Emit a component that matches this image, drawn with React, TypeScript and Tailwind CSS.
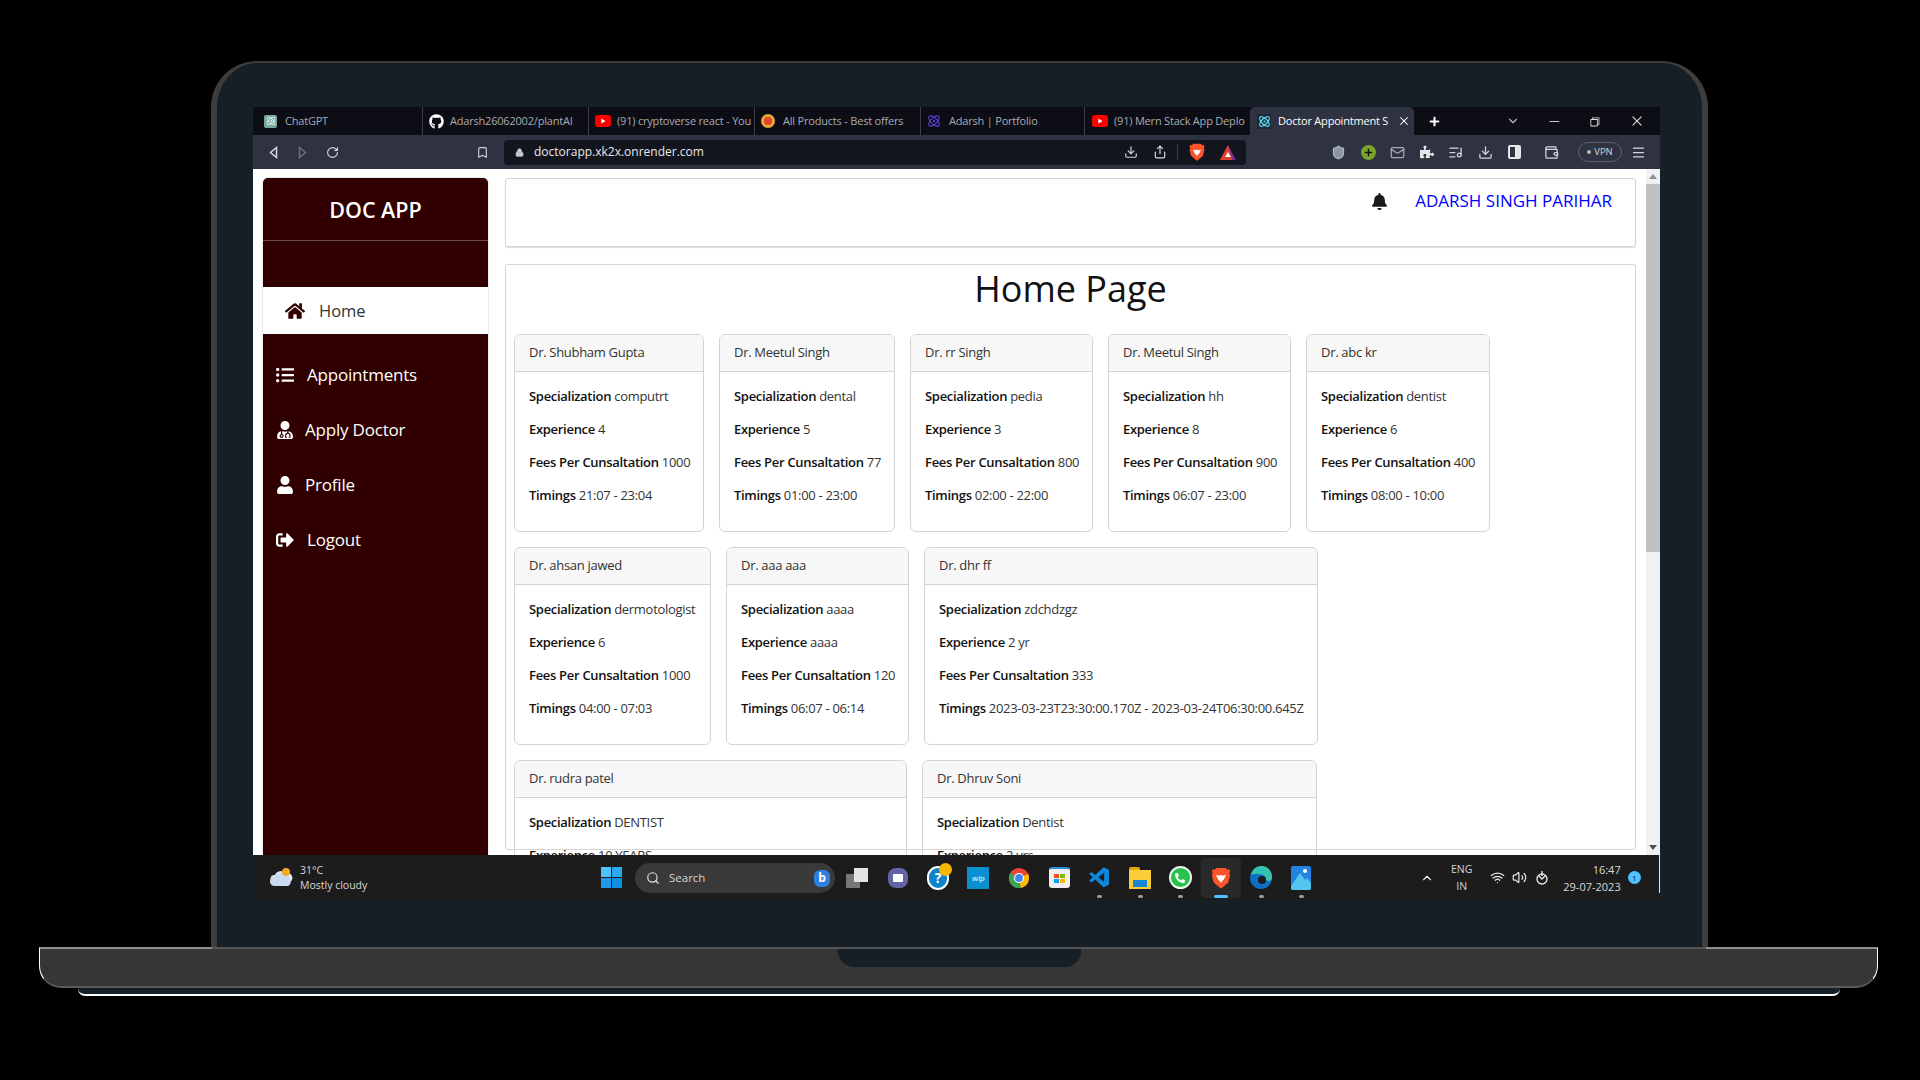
import React from "react";
import { FaHome, FaListUl, FaUserMd, FaUser, FaSignOutAlt, FaBell, FaGithub, FaPuzzlePiece, FaPhoneAlt, FaPlus } from "react-icons/fa";
import { VscChromeMinimize, VscChromeRestore, VscChromeClose, VscVscode } from "react-icons/vsc";
import { Search, ChevronDown, ChevronUp, RotateCw, Lock, Bookmark, Download, Share, Mail, ListMusic, Wifi, Volume2, Wallet, Menu, Shield, Plus, Atom } from "lucide-react";

const doctors = [
  { name: "Dr. Shubham Gupta", spec: "computrt", exp: "4", fee: "1000", time: "21:07 - 23:04", w: "w-[190px]" },
  { name: "Dr. Meetul Singh", spec: "dental", exp: "5", fee: "77", time: "01:00 - 23:00", w: "w-[176px]" },
  { name: "Dr. rr Singh", spec: "pedia", exp: "3", fee: "800", time: "02:00 - 22:00", w: "w-[183px]" },
  { name: "Dr. Meetul Singh", spec: "hh", exp: "8", fee: "900", time: "06:07 - 23:00", w: "w-[183px]" },
  { name: "Dr. abc kr", spec: "dentist", exp: "6", fee: "400", time: "08:00 - 10:00", w: "w-[184px]" },
  { name: "Dr. ahsan jawed", spec: "dermotologist", exp: "6", fee: "1000", time: "04:00 - 07:03", w: "w-[197px]" },
  { name: "Dr. aaa aaa", spec: "aaaa", exp: "aaaa", fee: "120", time: "06:07 - 06:14", w: "w-[183px]" },
  { name: "Dr. dhr ff", spec: "zdchdzgz", exp: "2 yr", fee: "333", time: "2023-03-23T23:30:00.170Z - 2023-03-24T06:30:00.645Z", w: "w-[394px]" },
  { name: "Dr. rudra patel", spec: "DENTIST", exp: "10 YEARS", fee: "500", time: "09:00 - 17:00", w: "w-[393px]" },
  { name: "Dr. Dhruv Soni", spec: "Dentist", exp: "2 yrs", fee: "300", time: "10:00 - 18:00", w: "w-[395px]" },
];

function Yt() {
  return (
    <svg width="16" height="12" viewBox="0 0 16 12">
      <rect width="16" height="12" rx="3" fill="#f00" />
      <path d="M6.3 3.4 10.6 6l-4.3 2.6Z" fill="#fff" />
    </svg>
  );
}

function BraveLogo({ size, className }: { size: number; className?: string }) {
  return (
    <svg width={size} height={size} viewBox="0 0 24 24" className={className}>
      <path d="M7 1h10l2 2 2-.5 1 2-1 2.500 1 2-2 8-7 6-1 .5-1-.5-7-6-2-8 1-2-1-2.500 1-2 2 .5Z" fill="#fb542b" />
      <path d="M6.500 8.500 10 9.500l2-1 2 1 3.500-1L15 14l-2 1.500-1 2-1-2L9 14Z" fill="#fff" />
    </svg>
  );
}

const tabs = [
  { t: "ChatGPT", w: "w-[169px] pl-[11px] gap-[8px]", i: <span className="w-[13px] h-[13px] rounded-[2px] bg-[#74aa9c] flex items-center justify-center"><Atom size={10} color="#fff" /></span> },
  { t: "Adarsh26062002/plantAI", w: "w-[166px] pl-[6px] gap-[6px] border-l border-[#3b3e4a]", i: <FaGithub size={15} color="#fff" /> },
  { t: "(91) cryptoverse react - You", w: "w-[166px] pl-[6px] gap-[6px] border-l border-[#3b3e4a]", i: <Yt /> },
  { t: "All Products - Best offers", w: "w-[166px] pl-[6px] gap-[8px] border-l border-[#3b3e4a]", i: <span className="w-[14px] h-[14px] rounded-full bg-[#e2452c] border-[3px] border-[#e8a33a]" /> },
  { t: "Adarsh | Portfolio", w: "w-[164px] pl-[6px] gap-[8px] border-l border-[#3b3e4a]", i: <Atom size={14} color="#5a3fd6" /> },
  { t: "(91) Mern Stack App Deplo", w: "w-[166px] pl-[7px] gap-[6px] border-l border-[#3b3e4a]", i: <Yt /> },
];

function Tab({ t, i, w }: { t: string; i: React.ReactNode; w: string }) {
  return (
    <div className={`h-[28px] flex items-center shrink-0 overflow-hidden whitespace-nowrap ${w}`}>
      {i}
      <span className="text-[11px] tracking-[-0.2px] text-[#a9abb2]">{t}</span>
    </div>
  );
}

function Card({ d }: { d: (typeof doctors)[number] }) {
  return (
    <div className={`${d.w} h-[198px] shrink-0 border border-[#d4d4d4] rounded-[6px] overflow-hidden whitespace-nowrap`}>
      <div className="h-[37px] bg-[#f7f7f7] border-b border-[#d4d4d4] pl-[14px] flex items-center text-[13px] tracking-[-0.3px] text-[#333]">{d.name}</div>
      <div className="pl-[14px] pt-[16px] text-[13px] tracking-[-0.3px] leading-[17px] text-[#333]">
        <p className="mb-[16px]"><b className="font-semibold text-[#111]">Specialization</b> {d.spec}</p>
        <p className="mb-[16px]"><b className="font-semibold text-[#111]">Experience</b> {d.exp}</p>
        <p className="mb-[16px]"><b className="font-semibold text-[#111]">Fees Per Cunsaltation</b> {d.fee}</p>
        <p><b className="font-semibold text-[#111]">Timings</b> {d.time}</p>
      </div>
    </div>
  );
}

function NavItem({ icon, label, gap, h }: { icon: React.ReactNode; label: string; gap: string; h: string }) {
  return (
    <div className={`flex items-center pl-[13px] text-white text-[17px] tracking-[-0.2px] ${gap} ${h}`}>
      {icon}
      <span>{label}</span>
    </div>
  );
}

function TbIcon({ children, dot, active }: { children: React.ReactNode; dot?: boolean; active?: boolean }) {
  return (
    <div className={`relative w-[40.4px] h-[40px] flex items-center justify-center rounded-[4px] ${active ? "bg-[#292929]" : ""}`}>
      {children}
      {dot && <span className="absolute bottom-0 left-[18px] w-[5px] h-[3px] rounded-full bg-[#9a9a9a]" />}
      {active && <span className="absolute bottom-0 left-[13px] w-[14px] h-[3px] rounded-full bg-[#4cc2ff]" />}
    </div>
  );
}

function ChromeLogo() {
  return (
    <svg width="22" height="22" viewBox="0 0 24 24">
      <circle cx="12" cy="12" r="11" fill="#ea4335" />
      <path d="M12 12 L2.5 17.5 A11 11 0 0 1 2.5 6.5 Z" fill="#34a853" />
      <path d="M12 12 L2.5 17.5 A11 11 0 0 0 14 22.8 Z" fill="#34a853" />
      <path d="M12 12 L22 7.5 A11 11 0 0 1 14 22.8 Z" fill="#fbbc05" />
      <circle cx="12" cy="12" r="5.5" fill="#fff" />
      <circle cx="12" cy="12" r="4.3" fill="#4285f4" />
    </svg>
  );
}

function Taskbar() {
  return (
    <div className="h-[45px] bg-[#1c1c1c] flex items-center relative text-white shrink-0">
      <div className="w-[17px]" />
      <svg width="24" height="22" viewBox="0 0 24 22">
        <path d="M4 16a4 4 0 0 1 1-8 6 6 0 0 1 10-2 5 5 0 0 1 4 10Z" fill="#dbe7f5" />
        <circle cx="16" cy="5" r="4" fill="#f5a623" />
        <path d="M5 10a5 5 0 0 1 9-1 5 5 0 0 1 6 4 4 4 0 0 1-2 6H4a4 4 0 0 1 1-9Z" fill="#c9daf0" />
      </svg>
      <div className="ml-[6px] w-[100px] text-[10.5px] leading-[15px] text-[#d8d8d8]">
        <div>31°C</div>
        <div>Mostly cloudy</div>
      </div>
      <div className="ml-[201px] w-[21px] h-[21px] grid grid-cols-2 gap-[1px]">
        <span className="bg-[#4fc3f7]" /><span className="bg-[#29a9f0]" /><span className="bg-[#1e9aea]" /><span className="bg-[#1090e0]" />
      </div>
      <div className="ml-[13px] w-[200px] h-[30px] rounded-full bg-[#3a3a3a] flex items-center pl-[11px] text-[11.5px] text-[#d4d4d4] gap-[9px] relative">
        <Search size={14} color="#e5e5e5" />
        <span>Search</span>
        <span className="absolute right-[5px] top-[7px] w-[16px] h-[17px] rounded-[6px] bg-[#2f7fe0] text-[12px] font-bold leading-[16px] text-center text-white">b</span>
      </div>
      <div className="ml-[2px] flex items-center">
        <TbIcon>
          <span className="relative w-[22px] h-[20px] block">
            <span className="absolute left-0 bottom-0 w-[14px] h-[14px] bg-[#777]" />
            <span className="absolute right-0 top-0 w-[14px] h-[14px] bg-[#e4e4e4]" />
          </span>
        </TbIcon>
        <TbIcon>
          <span className="w-[20px] h-[20px] rounded-[8px] bg-[#6264a7] flex items-center justify-center">
            <span className="w-[10px] h-[8px] bg-white rounded-[1px]" />
          </span>
        </TbIcon>
        <TbIcon>
          <span className="relative w-[22px] h-[24px] rounded-full bg-[#0d84c7] border-2 border-white text-white text-[14px] font-bold leading-[20px] text-center">?
            <span className="absolute -right-[5px] -top-[5px] w-[13px] h-[13px] rounded-full bg-[#f9b800]" />
          </span>
        </TbIcon>
        <TbIcon>
          <span className="w-[22px] h-[22px] bg-[#0a8fd1] text-white text-[8px] italic flex items-center justify-center">wlp</span>
        </TbIcon>
        <TbIcon><ChromeLogo /></TbIcon>
        <TbIcon>
          <span className="w-[21px] h-[21px] rounded-[3px] bg-[#eeeeee] border-t-2 border-[#1e90d8] grid grid-cols-2 gap-[1px] p-[5px]">
            <span className="bg-[#f25022]" /><span className="bg-[#7fba00]" /><span className="bg-[#00a4ef]" /><span className="bg-[#ffb900]" />
          </span>
        </TbIcon>
        <TbIcon dot><VscVscode size={24} color="#0f86d8" /></TbIcon>
        <TbIcon dot>
          <span className="relative w-[22px] h-[22px] block">
            <span className="absolute left-0 top-0 w-[11px] h-[6px] bg-[#e5a50a] rounded-t-[2px]" />
            <span className="absolute left-0 top-[3px] w-[22px] h-[19px] bg-[#fbcd38]" />
            <span className="absolute left-[4px] bottom-[2px] w-[14px] h-[7px] bg-[#1686d9]" />
          </span>
        </TbIcon>
        <TbIcon dot>
          <span className="w-[23px] h-[23px] rounded-full bg-[#27c24c] border-2 border-[#eef7ef] flex items-center justify-center">
            <FaPhoneAlt size={10} color="#fff" />
          </span>
        </TbIcon>
        <TbIcon active><BraveLogo size={22} /></TbIcon>
        <TbIcon dot>
          <svg width="24" height="24" viewBox="0 0 24 24">
            <circle cx="12" cy="12" r="11" fill="#0c6fc0" />
            <path d="M2 9a10.500 10.500 0 0 1 21 3c0 3-4 4-6 2 1-5-8-8-15-5Z" fill="#35c2b0" />
            <circle cx="13" cy="14" r="4" fill="#1c1c1c" />
          </svg>
        </TbIcon>
        <TbIcon dot>
          <svg width="20" height="24" viewBox="0 0 20 24">
            <rect width="20" height="24" rx="2" fill="#2382e2" />
            <path d="M0 20 9 7l5 7 2-2 4 5v5a2 2 0 0 1-2 2H2a2 2 0 0 1-2-2Z" fill="#53c7ef" />
            <circle cx="14" cy="5" r="2" fill="#fff" />
          </svg>
        </TbIcon>
      </div>
      <div className="ml-[95px] w-[20px] flex justify-center"><ChevronUp size={14} color="#e8e8e8" /></div>
      <div className="ml-[12px] w-[26px] text-center text-[10.5px] leading-[17px] text-[#d4d4d4]">
        <div>ENG</div>
        <div>IN</div>
      </div>
      <div className="ml-[15px] flex items-center gap-[7px]">
        <Wifi size={15} color="#e5e5e5" />
        <Volume2 size={15} color="#e5e5e5" />
        <svg width="16" height="16" viewBox="0 0 16 16" fill="none" stroke="#e5e5e5" strokeWidth="1.4"><circle cx="8" cy="9" r="5" /><path d="M8 1v5M5 6l3 3 3-3" /></svg>
      </div>
      <div className="ml-[1px] w-[70px] text-right text-[11px] leading-[17px] text-[#d8d8d8]">
        <div>16:47</div>
        <div>29-07-2023</div>
      </div>
      <span className="ml-[7px] w-[13px] h-[13px] rounded-full bg-[#4cc2ff] text-[8px] text-[#111] text-center leading-[13px]">1</span>
      <span className="absolute right-0 top-0 h-[38px] w-[1px] bg-[#e5e5e5]" />
    </div>
  );
}

function Chrome() {
  const ic = "#d5d7dc";
  return (
    <div className="shrink-0 text-white">
      <div className="h-[28px] bg-[#0c0d15] flex items-center">
        {tabs.map((t) => <Tab key={t.t} t={t.t} i={t.i} w={t.w} />)}
        <div className="w-[164px] h-[28px] bg-[#2f3341] rounded-t-[5px] flex items-center gap-[7px] pl-[7px] shrink-0 overflow-hidden whitespace-nowrap">
          <span className="w-[14px] h-[15px] bg-[#1c2a33] flex items-center justify-center"><Atom size={13} color="#61dafb" /></span>
          <span className="text-[11px] tracking-[-0.2px] text-white w-[113px] overflow-hidden">Doctor Appointment S</span>
          <VscChromeClose size={12} color="#fff" />
        </div>
        <FaPlus size={11} color="#fff" className="ml-[15px]" />
        <ChevronDown size={14} color="#b8bac0" className="ml-[66px]" />
        <VscChromeMinimize size={14} color="#e5e5e5" className="ml-[27px]" />
        <VscChromeRestore size={13} color="#e5e5e5" className="ml-[27px]" />
        <VscChromeClose size={14} color="#e5e5e5" className="ml-[29px]" />
      </div>
      <div className="h-[34px] bg-[#2f3341] flex items-center">
        <svg width="9" height="13" viewBox="0 0 9 13" className="ml-[16px]" fill="none" stroke={ic} strokeWidth="1.5"><path d="M7.500 1.500 1.500 6.500l6 5Z" /></svg>
        <svg width="9" height="13" viewBox="0 0 9 13" className="ml-[20px]" fill="none" stroke="#6c6f7a" strokeWidth="1.5"><path d="M1.500 1.500l6 5-6 5Z" /></svg>
        <RotateCw size={13} color={ic} className="ml-[19px]" />
        <Bookmark size={13} color={ic} className="ml-[137px]" />
        <div className="ml-[15px] w-[742px] h-[25px] bg-[#13151e] rounded-[4px] flex items-center">
          <Lock size={9} color="#c8cad0" fill="#c8cad0" className="ml-[11px]" />
          <span className="ml-[10px] text-[12px] text-[#e8e8ea]">doctorapp.xk2x.onrender.com</span>
          <Download size={14} color={ic} className="ml-[420px]" />
          <Share size={14} color={ic} className="ml-[15px]" />
          <span className="ml-[10px] w-px h-[16px] bg-[#3b3e4a]" />
          <BraveLogo size={18} className="ml-[10px]" />
          <svg width="16" height="15" viewBox="0 0 16 15" className="ml-[14px]"><path d="M8 0 16 15H0Z" fill="#7b2d8e" /><path d="M8 0 12 15H0Z" fill="#e0402f" /><path d="M8 7l3 5H5Z" fill="#fff" /></svg>
        </div>
        <Shield size={15} color="#aeb4c2" fill="#8c94a6" className="ml-[85px]" />
        <span className="ml-[15px] w-[15px] h-[15px] rounded-full bg-[#7aa52c] flex items-center justify-center"><Plus size={11} color="#111" strokeWidth={3} /></span>
        <Mail size={15} color="#a9acb5" className="ml-[14px]" />
        <FaPuzzlePiece size={14} color="#e5e6ea" className="ml-[15px]" />
        <ListMusic size={15} color={ic} className="ml-[14px]" />
        <Download size={15} color={ic} className="ml-[15px]" />
        <span className="ml-[15px] w-[13px] h-[14px] rounded-[2px] border-2 border-[#e5e6ea] flex justify-end"><span className="w-[4px] bg-[#e5e6ea]" /></span>
        <Wallet size={15} color={ic} className="ml-[23px]" />
        <span className="ml-[19px] w-[44px] h-[20px] rounded-full border border-[#5a5e6c] flex items-center justify-center gap-[3px] text-[9.5px] text-[#d5d7dc]">
          <span className="w-[4px] h-[4px] rounded-full bg-[#b5b8c0]" />VPN
        </span>
        <Menu size={15} color={ic} className="ml-[9px]" />
      </div>
    </div>
  );
}

function Page() {
  return (
    <div className="flex-1 min-h-0 bg-white flex overflow-hidden">
      <div className="flex-1 min-w-0 flex pt-[9px] pl-[10px] gap-[17px]">
        <aside className="w-[225px] shrink-0 bg-[#300000] rounded-t-[5px] shadow-[0_0_2px_#bbb]">
          <div className="h-[63px] pt-[2px] border-b border-[#6b4a4a] flex items-center justify-center text-white text-[21.5px] font-semibold">DOC APP</div>
          <div className="h-[46px]" />
          <div className="h-[47px] pt-[1px] bg-white flex items-center pl-[22px] gap-[14px] text-[#300000] text-[16.5px]">
            <FaHome size={20} color="#300000" />
            <span className="text-[#333]">Home</span>
          </div>
          <div className="h-[18px]" />
          <NavItem h="h-[45px]" gap="gap-[13px]" icon={<FaListUl size={18} />} label="Appointments" />
          <div className="h-[10px]" />
          <NavItem h="h-[45px]" gap="gap-[11px]" icon={<FaUserMd size={18} />} label="Apply Doctor" />
          <div className="h-[10px]" />
          <NavItem h="h-[45px]" gap="gap-[11px]" icon={<FaUser size={18} />} label="Profile" />
          <div className="h-[10px]" />
          <NavItem h="h-[45px]" gap="gap-[13px]" icon={<FaSignOutAlt size={18} />} label="Logout" />
        </aside>
        <main className="flex-1 min-w-0 mr-[10px]">
          <div className="h-[69px] border border-[#d5d5d5] shadow-[0_1px_1px_#ddd] rounded-[3px] flex items-start justify-end pr-[23px] pt-[10px] gap-[27px]">
            <FaBell size={17} color="#1a1a1a" className="mt-[4px]" />
            <span className="text-[17px] text-[#0000ff] leading-[24px]">ADARSH SINGH PARIHAR</span>
          </div>
          <div className="mt-[17px] h-[586px] border border-[#d5d5d5] rounded-[3px] px-[8px]">
            <h1 className="h-[69px] text-center text-[36px] leading-[48px] text-[#111] font-normal">Home Page</h1>
            <div className="flex flex-wrap gap-x-[15px] gap-y-[15px] w-[1110px] h-[522px] overflow-hidden">
              {doctors.map((d, i) => <Card key={i} d={d} />)}
            </div>
          </div>
        </main>
      </div>
      <div className="w-[14px] shrink-0 bg-[#f1f1f1] flex flex-col items-center justify-between relative">
        <div className="w-full">
          <div className="h-[15px] flex items-center justify-center"><span className="border-x-[4px] border-x-transparent border-b-[5px] border-b-[#8f8f8f]" /></div>
          <div className="h-[368px] bg-[#c1c1c1]" />
        </div>
        <div className="h-[15px] flex items-center justify-center"><span className="border-x-[4px] border-x-transparent border-t-[5px] border-t-[#505050]" /></div>
      </div>
    </div>
  );
}

export default function App() {
  return (
    <div className="w-[1920px] h-[1080px] bg-black overflow-hidden pt-[61px]" style={{ fontFamily: "'Open Sans', sans-serif" }}>
      <div className="ml-[211px] w-[1497px] h-[886px] bg-[#161e26] border-x-[6px] border-t-2 border-[#3d3d3d] rounded-t-[46px] pt-[44px] pl-[36px]">
        <div className="w-[1407px] h-[793px] flex flex-col">
          <Chrome />
          <Page />
          <Taskbar />
        </div>
      </div>
      <div className="relative ml-[39px] w-[1839px] h-[41px] bg-[#363636] border-t-2 border-b-2 border-t-[#8f8f8f] border-b-[#5a5a5a] border-x border-x-white rounded-b-[22px]">
        <div className="absolute left-[172px] right-[171px] -top-[2px] h-[2px] bg-[#555]" />
        <div className="absolute left-[798px] top-0 w-[243px] h-[18px] bg-[#161e26] rounded-b-[16px]" />
      </div>
      <div className="ml-[78px] w-[1762px] h-[8px] bg-[#161e26] border-b-2 border-white rounded-b-[7px]" />
    </div>
  );
}
